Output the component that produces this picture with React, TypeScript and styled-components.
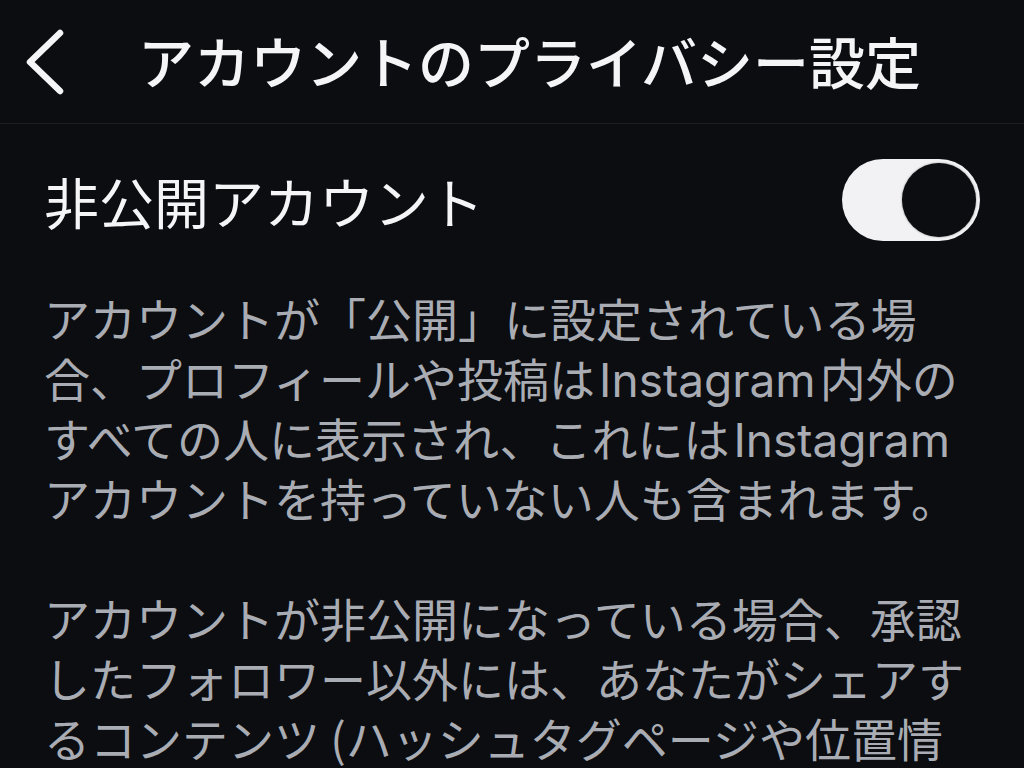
import React, { useState } from 'react'
import styled, { createGlobalStyle } from 'styled-components'

const GlobalStyle = createGlobalStyle`
  html, body {
    margin: 0;
    padding: 0;
    background: #0b0d11;
    height: 768px;
    overflow: hidden;
  }
  body {
    font-family: "Noto Sans CJK JP", "Noto Sans", sans-serif;
    -webkit-font-smoothing: antialiased;
  }
`

const Page = styled.div`
  width: 1024px;
  height: 768px;
  background: #0b0d11;
  color: #f5f5f7;
  overflow: hidden;
`

const Header = styled.header`
  display: flex;
  align-items: center;
  height: 124px;
  border-bottom: 1px solid #1b1e23;
  box-sizing: border-box;
`

const BackButton = styled.button`
  display: flex;
  align-items: center;
  justify-content: center;
  width: 90px;
  height: 100%;
  padding: 0;
  margin-right: 48px;
  background: none;
  border: none;
  cursor: pointer;
`

const Title = styled.h1`
  margin: 0;
  font-size: 56px;
  font-weight: 500;
  line-height: 1;
  color: #f5f5f7;
  padding-bottom: 4px;
`

const Content = styled.main`
  padding: 0 44px;
`

const SettingRow = styled.div`
  display: flex;
  align-items: center;
  justify-content: space-between;
  padding: 35px 0 46px;
`

const Label = styled.span`
  font-size: 55px;
  font-weight: 400;
  line-height: 82px;
  color: #f5f5f7;
`

const Switch = styled.button<{ $on: boolean }>`
  position: relative;
  width: 138px;
  height: 82px;
  border-radius: 41px;
  border: none;
  padding: 0;
  background: ${(p) => (p.$on ? '#f2f2f4' : '#3a3c42')};
  cursor: pointer;
  flex-shrink: 0;
`

const Knob = styled.span<{ $on: boolean }>`
  position: absolute;
  top: 4px;
  left: ${(p) => (p.$on ? '60px' : '4px')};
  width: 74px;
  height: 74px;
  border-radius: 50%;
  background: #0b0d11;
  box-shadow: 0 0 2px rgba(0, 0, 0, 0.5);
  transition: left 0.2s;
`

const Description = styled.p`
  margin: 0 0 60px;
  font-size: 46px;
  line-height: 60px;
  color: #a9acb3;
  line-break: strict;
`

// latin words get their own face, like the system font does on the phone
const Latin = styled.span`
  font-family: Inter, "Noto Sans", sans-serif;
  line-height: 1;
  margin: 0 4px;
`

const App = () => {
  const [isPrivate, setIsPrivate] = useState(true)

  return (
    <>
      <GlobalStyle />
      <Page>
        <Header>
          <BackButton aria-label="戻る">
            <svg width="42" height="68" viewBox="0 0 42 68" fill="none">
              <path
                d="M36 5 L6 34 L36 63"
                stroke="#f5f5f7"
                strokeWidth="6.5"
                strokeLinecap="round"
                strokeLinejoin="round"
              />
            </svg>
          </BackButton>
          <Title>アカウントのプライバシー設定</Title>
        </Header>
        <Content>
          <SettingRow>
            <Label>非公開アカウント</Label>
            <Switch $on={isPrivate} onClick={() => setIsPrivate(!isPrivate)}>
              <Knob $on={isPrivate} />
            </Switch>
          </SettingRow>
          <Description>
            アカウントが「公開」に設定されている場合、プロフィールや投稿は<Latin>Instagram</Latin>内外のすべての人に表示され、これには<Latin>Instagram</Latin>アカウントを持っていない人も含まれます。
          </Description>
          <Description>
            アカウントが非公開になっている場合、承認したフォロワー以外には、あなたがシェアするコンテンツ
            (ハッシュタグページや位置情報ページの写真や動画を含む)
            や、フォロワーリストとフォロー中リストは表示されません。
          </Description>
        </Content>
      </Page>
    </>
  )
}

export default App
